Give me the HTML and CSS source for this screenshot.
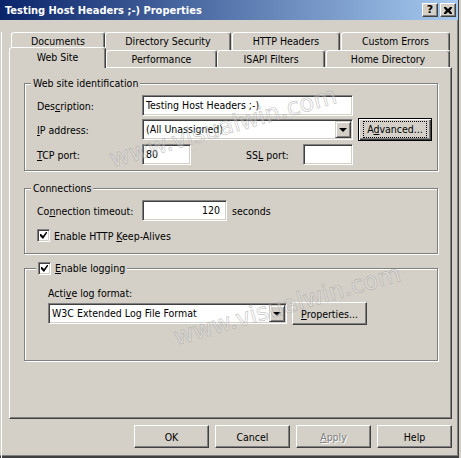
FILE: index.html
```html
<!DOCTYPE html>
<html lang="en">
<head>
    <meta charset="UTF-8">
    <title>Testing Host Headers ;-) Properties</title>
    <link rel="stylesheet" href="styles.css">
</head>
<body>
    <div class="window">
        <div class="titlebar">
            <span class="title">Testing Host Headers ;-) Properties</span>
            <div class="tb-btns">
                <span class="tb-btn help">?</span>
                <span class="tb-btn">
                    <svg width="8" height="7" viewBox="0 0 8 7"><path d="M0 0h2l2 2 2-2h2v1L6 3.5 8 6v1H6L4 5 2 7H0V6l2-2.5L0 1z" fill="#000"/></svg>
                </span>
            </div>
        </div>

        <div class="client">
            <div class="tab-row back">
                <div class="tab w-docs">Documents</div>
                <div class="tab w-dirsec">Directory Security</div>
                <div class="tab w-http">HTTP Headers</div>
                <div class="tab w-errors">Custom Errors</div>
            </div>
            <div class="tab-row front">
                <div class="tab selected w-web">Web Site</div>
                <div class="tab w-perf">Performance</div>
                <div class="tab w-isapi">ISAPI Filters</div>
                <div class="tab w-home">Home Directory</div>
            </div>

            <div class="panel">
                <div class="group g-ident">
                    <div class="legend">Web site identification</div>
                    <div class="row first">
                        <span class="label">Des<u>c</u>ription:</span>
                        <div class="field w-desc">Testing Host Headers ;-)</div>
                    </div>
                    <div class="row">
                        <span class="label"><u>I</u>P address:</span>
                        <div class="field combo w-ip">
                            <span>(All Unassigned)</span>
                            <span class="drop"><i class="arrow"></i></span>
                        </div>
                        <button class="btn default w-adv"><span class="focus">A<u>d</u>vanced...</span></button>
                    </div>
                    <div class="row tcp">
                        <span class="label"><u>T</u>CP port:</span>
                        <div class="field w-tcp">80</div>
                        <span class="label ssl">SS<u>L</u> port:</span>
                        <div class="field w-ssl"></div>
                    </div>
                </div>

                <div class="group g-conn">
                    <div class="legend">Connections</div>
                    <div class="row first">
                        <span class="label">Co<u>n</u>nection timeout:</span>
                        <div class="field num w-timeout">120</div>
                        <span class="unit">seconds</span>
                    </div>
                    <div class="row check-row">
                        <span class="check"><svg width="7" height="7" viewBox="0 0 7 7"><path d="M0 2h1l2 2 3-4h1v1L3 7 0 4z" fill="#000"/></svg></span>
                        <span>Enable HTTP <u>K</u>eep-Alives</span>
                    </div>
                </div>

                <div class="group g-log">
                    <div class="legend check-legend">
                        <span class="check"><svg width="7" height="7" viewBox="0 0 7 7"><path d="M0 2h1l2 2 3-4h1v1L3 7 0 4z" fill="#000"/></svg></span>
                        <span><u>E</u>nable logging</span>
                    </div>
                    <div class="log-label">Acti<u>v</u>e log format:</div>
                    <div class="row log-row">
                        <div class="field combo w-format">
                            <span>W3C Extended Log File Format</span>
                            <span class="drop"><i class="arrow"></i></span>
                        </div>
                        <button class="btn w-props"><u>P</u>roperties...</button>
                    </div>
                </div>
            </div>

            <div class="buttons">
                <button class="btn">OK</button>
                <button class="btn">Cancel</button>
                <button class="btn disabled"><u>A</u>pply</button>
                <button class="btn">Help</button>
            </div>
        </div>

        <!-- site watermark over the screenshot -->
        <div class="watermark wm-top">www.visualwin.com</div>
        <div class="watermark wm-bottom">www.visualwin.com</div>
    </div>
</body>
</html>
```

FILE: styles.css
```css
* { margin: 0; padding: 0; box-sizing: border-box; }
body { background: #d4d0c8; font: 10.5px "DejaVu Sans Condensed", "DejaVu Sans", sans-serif; color: #000; overflow: hidden; }
u { text-decoration: underline; text-underline-offset: 1px; }

.window { position: relative; width: 459px; height: 458px; border-right: 1px solid #404040; border-bottom: 2px solid #404040; box-shadow: inset -1px -1px #808080; }

/* title bar */
.titlebar { height: 20px; background: linear-gradient(to right, #0a246a, #a6caf0); display: flex; align-items: center; justify-content: space-between; padding: 0 2px 0 5px; }
.title { color: #fff; font: bold 11px "DejaVu Sans Condensed", "DejaVu Sans", sans-serif; }
.tb-btns { display: flex; gap: 2px; }
.tb-btn { width: 16px; height: 14px; background: #d4d0c8; border: 1px solid; border-color: #fff #404040 #404040 #fff; box-shadow: inset -1px -1px #808080; display: flex; align-items: center; justify-content: center; }
.tb-btn.help { font: bold 11px "DejaVu Sans", sans-serif; line-height: 12px; }

.client { height: 436px; margin-left: 1px; border-left: 1px solid #fff; }

/* tabs */
.tab-row { display: flex; align-items: flex-start; }
.tab-row.back { margin: 12px 0 0 9px; }
.tab-row.front { margin: -3px 0 0 7px; height: 21px; }
.tab { height: 18px; line-height: 16px; text-align: center; background: #d4d0c8; border: 1px solid; border-bottom: none; border-color: #fff #404040 transparent #fff; border-radius: 3px 3px 0 0; box-shadow: inset -1px 0 #808080; white-space: nowrap; }
.front .tab { height: 17px; margin-top: 3px; }
.front .tab.selected { height: 21px; margin-top: 0; line-height: 18px; position: relative; z-index: 1; }
.w-docs { width: 94px; }
.w-dirsec { width: 126px; }
.w-http { width: 108px; margin-left: 1px; }
.w-errors { width: 109px; margin-left: 1px; }
.w-web { width: 97px; }
.w-perf { width: 111px; }
.w-isapi { width: 108px; }
.w-home { width: 124px; margin-left: 1px; }

.panel { margin: -1px 0 0 7px; width: 443px; height: 352px; border: 1px solid; border-color: #fff #404040 #404040 #fff; box-shadow: inset -1px -1px #808080; padding: 15px 0 0 14px; }

/* group boxes */
.group { width: 414px; border: 1px solid #808080; box-shadow: inset 1px 1px #fff, 1px 1px #fff; }
.legend { width: fit-content; height: 13px; line-height: 13px; margin: -7px 0 0 6px; padding: 0 2px; background: #d4d0c8; }
.g-ident { height: 88px; padding-left: 12px; }
.g-conn { height: 66px; margin-top: 17px; padding-left: 12px; }
.g-log { height: 93px; margin-top: 14px; }
.g-ident .legend, .g-conn .legend { margin-left: -6px; }

.row { display: flex; align-items: center; height: 21px; margin-top: 3px; }
.row.first { margin-top: 5px; }
.row.tcp { margin-top: 4px; }
.label { width: 105px; white-space: nowrap; }
.label.ssl { width: 57px; margin-left: 55px; }
.unit { margin-left: 5px; }

.field { height: 21px; line-height: 19px; background: #fff; border: 1px solid; border-color: #808080 #fff #fff #808080; box-shadow: inset 1px 1px #404040, inset -1px -1px #d4d0c8; padding: 0 3px; white-space: nowrap; }
.field.num { text-align: right; padding-right: 6px; }
.combo { display: flex; justify-content: space-between; align-items: center; padding-right: 1px; }
.drop { width: 16px; height: 17px; background: #d4d0c8; border: 1px solid; border-color: #d4d0c8 #404040 #404040 #d4d0c8; box-shadow: inset 1px 1px #fff, inset -1px -1px #808080; display: flex; align-items: center; justify-content: center; }
.arrow { width: 0; height: 0; border-left: 4px solid transparent; border-right: 4px solid transparent; border-top: 4px solid #000; margin-top: 1px; }

.w-desc { width: 211px; }
.w-ip { width: 211px; }
.w-tcp { width: 49px; }
.w-ssl { width: 50px; }
.w-timeout { width: 85px; }
.w-format { width: 239px; }

/* buttons */
.btn { font: inherit; color: #000; background: #d4d0c8; width: 75px; height: 23px; border: 1px solid; border-color: #fff #404040 #404040 #fff; box-shadow: inset -1px -1px #808080; display: flex; align-items: center; justify-content: center; }
.btn.default { border: 1px solid #000; box-shadow: inset 1px 1px #fff, inset -1px -1px #404040, inset -2px -2px #808080; }
.focus { border: 1px dotted #000; padding: 1px 3px 2px; line-height: 12px; }
.w-adv { width: 74px; margin-left: 5px; }
.w-props { margin-left: 5px; }
.btn.disabled { color: #808080; text-shadow: 1px 1px #fff; }

.check-row { height: 13px; margin-top: 8px; }
.check { width: 13px; height: 13px; background: #fff; border: 1px solid; border-color: #808080 #fff #fff #808080; box-shadow: inset 1px 1px #404040, inset -1px -1px #d4d0c8; display: inline-flex; align-items: center; justify-content: center; margin-right: 4px; flex-shrink: 0; }
.check-legend { display: flex; align-items: center; margin-left: 11px; }
.log-label { margin: 12px 0 0 23px; height: 13px; line-height: 13px; }
.log-row { margin-left: 23px; }

.buttons { display: flex; gap: 6px; margin: 6px 0 0 132px; }

/* watermark */
.watermark { position: absolute; width: 240px; height: 30px; line-height: 30px; text-align: center; font: 24px "DejaVu Sans", sans-serif; color: rgba(255, 255, 255, 0.3); -webkit-text-stroke: 0.7px rgba(150, 150, 150, 0.55); transform: rotate(-16deg); transform-origin: 120px 17px; pointer-events: none; white-space: nowrap; }
.wm-top { left: 104px; top: 113px; }
.wm-bottom { left: 168px; top: 291px; }
```
